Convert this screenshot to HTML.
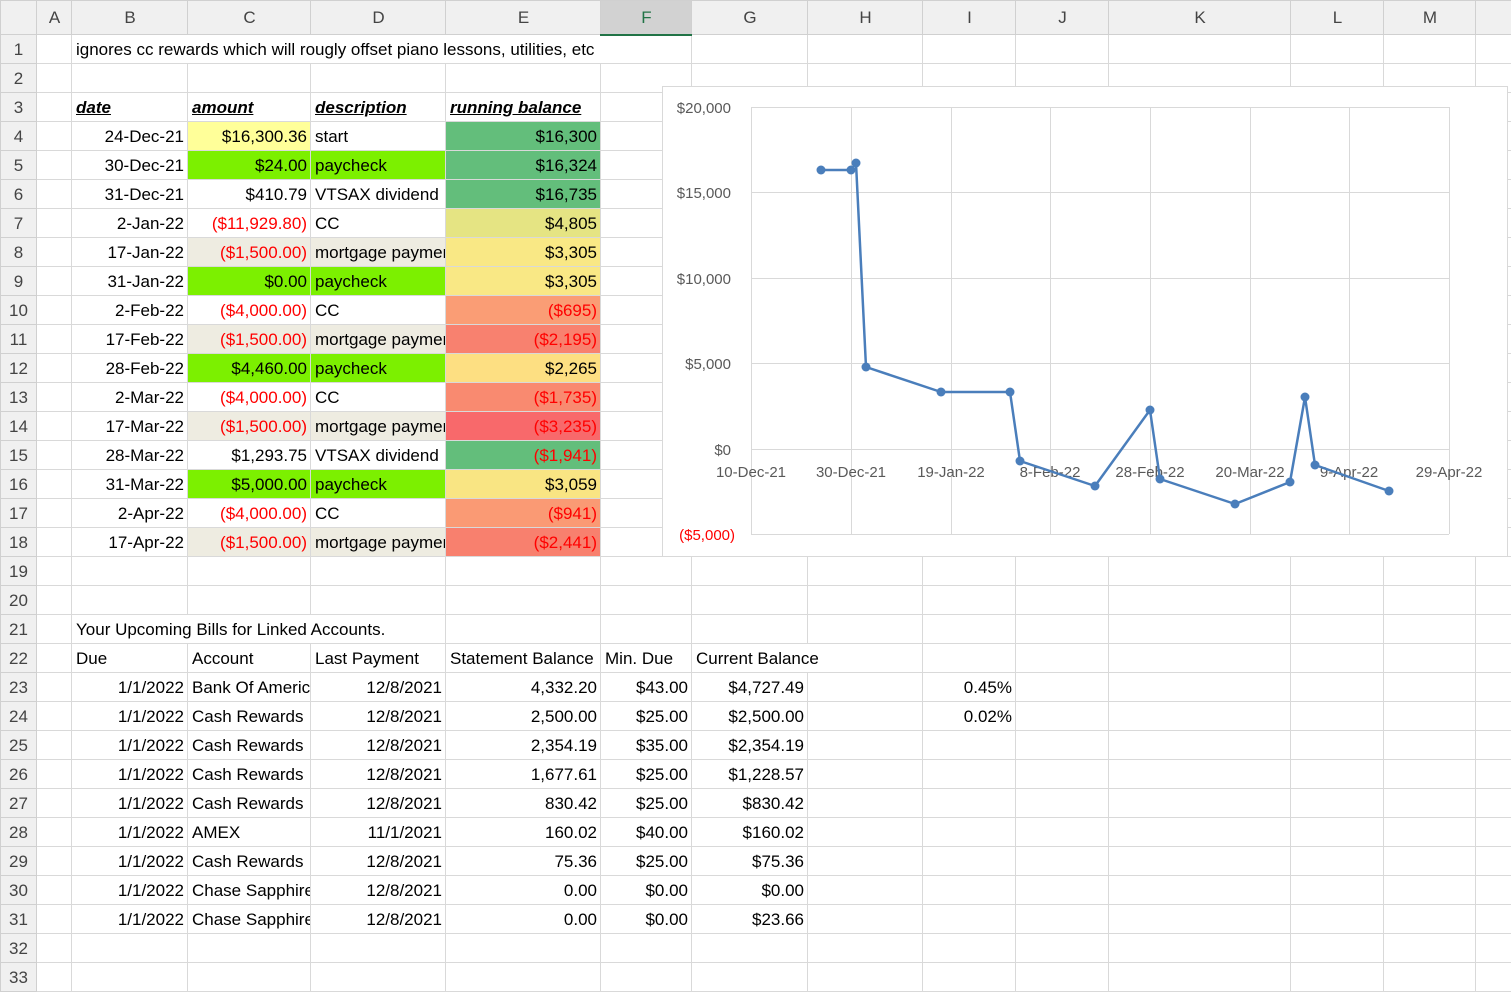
<!DOCTYPE html>
<html><head><meta charset="utf-8"><style>
*{margin:0;padding:0;box-sizing:border-box}
body{width:1511px;height:991px;overflow:hidden;background:#fff;font-family:"Liberation Sans",sans-serif;font-size:17px;color:#000;position:relative}
table{border-collapse:collapse;table-layout:fixed;position:absolute;left:0;top:0;width:1515px}
td{height:29px;border:1px solid #D9D9D9;white-space:nowrap;overflow:hidden;padding:0 3px 0 4px;line-height:27px}
tr.h td{height:34px;background:#F0F0F0;color:#444;text-align:center;font-size:17px;border-color:#D0D0D0}
td.rh{background:#F0F0F0;color:#444;text-align:center;padding:0;border-color:#D0D0D0}
.r{text-align:right}
.red{color:#FF0000}
.hd{font-weight:bold;font-style:italic;text-decoration:underline}
.y{background:#FFFF99}.g{background:#7CF000}.b{background:#EEECE1}
.sel{background:#D2D2D2!important;border-bottom:2px solid #217346!important;color:#217346!important}
.ov{overflow:visible}
</style></head><body>
<table>
<colgroup><col style="width:36px"><col style="width:35px"><col style="width:116px"><col style="width:123px"><col style="width:135px"><col style="width:155px"><col style="width:91px"><col style="width:116px"><col style="width:115px"><col style="width:93px"><col style="width:93px"><col style="width:182px"><col style="width:93px"><col style="width:92px"><col style="width:40px"></colgroup>
<tr class="h"><td></td><td>A</td><td>B</td><td>C</td><td>D</td><td>E</td><td class="sel">F</td><td>G</td><td>H</td><td>I</td><td>J</td><td>K</td><td>L</td><td>M</td><td></td></tr>
<tr><td class="rh">1</td><td></td><td class="ov" colspan="5">ignores cc rewards which will rougly offset piano lessons, utilities, etc</td><td></td><td></td><td></td><td></td><td></td><td></td><td></td><td></td></tr>
<tr><td class="rh">2</td><td></td><td></td><td></td><td></td><td></td><td></td><td></td><td></td><td></td><td></td><td></td><td></td><td></td><td></td></tr>
<tr><td class="rh">3</td><td></td><td class="hd">date</td><td class="hd">amount</td><td class="hd">description</td><td class="hd">running balance</td><td></td><td></td><td></td><td></td><td></td><td></td><td></td><td></td><td></td></tr>
<tr><td class="rh">4</td><td></td><td class="r">24-Dec-21</td><td class="r y">$16,300.36</td><td>start</td><td class="r" style="background:#63BE7B">$16,300</td><td></td><td></td><td></td><td></td><td></td><td></td><td></td><td></td><td></td></tr>
<tr><td class="rh">5</td><td></td><td class="r">30-Dec-21</td><td class="r g">$24.00</td><td class="g">paycheck</td><td class="r" style="background:#63BE7B">$16,324</td><td></td><td></td><td></td><td></td><td></td><td></td><td></td><td></td><td></td></tr>
<tr><td class="rh">6</td><td></td><td class="r">31-Dec-21</td><td class="r">$410.79</td><td>VTSAX dividend</td><td class="r" style="background:#63BE7B">$16,735</td><td></td><td></td><td></td><td></td><td></td><td></td><td></td><td></td><td></td></tr>
<tr><td class="rh">7</td><td></td><td class="r">2-Jan-22</td><td class="r red">($11,929.80)</td><td>CC</td><td class="r" style="background:#E5E483">$4,805</td><td></td><td></td><td></td><td></td><td></td><td></td><td></td><td></td><td></td></tr>
<tr><td class="rh">8</td><td></td><td class="r">17-Jan-22</td><td class="r red b">($1,500.00)</td><td class="b">mortgage payment</td><td class="r" style="background:#F9E885">$3,305</td><td></td><td></td><td></td><td></td><td></td><td></td><td></td><td></td><td></td></tr>
<tr><td class="rh">9</td><td></td><td class="r">31-Jan-22</td><td class="r g">$0.00</td><td class="g">paycheck</td><td class="r" style="background:#F9E885">$3,305</td><td></td><td></td><td></td><td></td><td></td><td></td><td></td><td></td><td></td></tr>
<tr><td class="rh">10</td><td></td><td class="r">2-Feb-22</td><td class="r red">($4,000.00)</td><td>CC</td><td class="r red" style="background:#FA9D75">($695)</td><td></td><td></td><td></td><td></td><td></td><td></td><td></td><td></td><td></td></tr>
<tr><td class="rh">11</td><td></td><td class="r">17-Feb-22</td><td class="r red b">($1,500.00)</td><td class="b">mortgage payment</td><td class="r red" style="background:#F8816F">($2,195)</td><td></td><td></td><td></td><td></td><td></td><td></td><td></td><td></td><td></td></tr>
<tr><td class="rh">12</td><td></td><td class="r">28-Feb-22</td><td class="r g">$4,460.00</td><td class="g">paycheck</td><td class="r" style="background:#FDDF82">$2,265</td><td></td><td></td><td></td><td></td><td></td><td></td><td></td><td></td><td></td></tr>
<tr><td class="rh">13</td><td></td><td class="r">2-Mar-22</td><td class="r red">($4,000.00)</td><td>CC</td><td class="r red" style="background:#F98A70">($1,735)</td><td></td><td></td><td></td><td></td><td></td><td></td><td></td><td></td><td></td></tr>
<tr><td class="rh">14</td><td></td><td class="r">17-Mar-22</td><td class="r red b">($1,500.00)</td><td class="b">mortgage payment</td><td class="r red" style="background:#F8696B">($3,235)</td><td></td><td></td><td></td><td></td><td></td><td></td><td></td><td></td><td></td></tr>
<tr><td class="rh">15</td><td></td><td class="r">28-Mar-22</td><td class="r">$1,293.75</td><td>VTSAX dividend</td><td class="r red" style="background:#63BE7B">($1,941)</td><td></td><td></td><td></td><td></td><td></td><td></td><td></td><td></td><td></td></tr>
<tr><td class="rh">16</td><td></td><td class="r">31-Mar-22</td><td class="r g">$5,000.00</td><td class="g">paycheck</td><td class="r" style="background:#F9E583">$3,059</td><td></td><td></td><td></td><td></td><td></td><td></td><td></td><td></td><td></td></tr>
<tr><td class="rh">17</td><td></td><td class="r">2-Apr-22</td><td class="r red">($4,000.00)</td><td>CC</td><td class="r red" style="background:#FA9A74">($941)</td><td></td><td></td><td></td><td></td><td></td><td></td><td></td><td></td><td></td></tr>
<tr><td class="rh">18</td><td></td><td class="r">17-Apr-22</td><td class="r red b">($1,500.00)</td><td class="b">mortgage payment</td><td class="r red" style="background:#F8806E">($2,441)</td><td></td><td></td><td></td><td></td><td></td><td></td><td></td><td></td><td></td></tr>
<tr><td class="rh">19</td><td></td><td></td><td></td><td></td><td></td><td></td><td></td><td></td><td></td><td></td><td></td><td></td><td></td><td></td></tr>
<tr><td class="rh">20</td><td></td><td></td><td></td><td></td><td></td><td></td><td></td><td></td><td></td><td></td><td></td><td></td><td></td><td></td></tr>
<tr><td class="rh">21</td><td></td><td class="ov" colspan="3">Your Upcoming Bills for Linked Accounts.</td><td></td><td></td><td></td><td></td><td></td><td></td><td></td><td></td><td></td><td></td></tr>
<tr><td class="rh">22</td><td></td><td>Due</td><td>Account</td><td>Last Payment</td><td>Statement Balance</td><td>Min. Due</td><td class="ov" colspan="2">Current Balance</td><td></td><td></td><td></td><td></td><td></td><td></td></tr>
<tr><td class="rh">23</td><td></td><td class="r">1/1/2022</td><td>Bank Of America</td><td class="r">12/8/2021</td><td class="r">4,332.20</td><td class="r">$43.00</td><td class="r">$4,727.49</td><td></td><td class="r">0.45%</td><td></td><td></td><td></td><td></td><td></td></tr>
<tr><td class="rh">24</td><td></td><td class="r">1/1/2022</td><td>Cash Rewards</td><td class="r">12/8/2021</td><td class="r">2,500.00</td><td class="r">$25.00</td><td class="r">$2,500.00</td><td></td><td class="r">0.02%</td><td></td><td></td><td></td><td></td><td></td></tr>
<tr><td class="rh">25</td><td></td><td class="r">1/1/2022</td><td>Cash Rewards</td><td class="r">12/8/2021</td><td class="r">2,354.19</td><td class="r">$35.00</td><td class="r">$2,354.19</td><td></td><td></td><td></td><td></td><td></td><td></td><td></td></tr>
<tr><td class="rh">26</td><td></td><td class="r">1/1/2022</td><td>Cash Rewards</td><td class="r">12/8/2021</td><td class="r">1,677.61</td><td class="r">$25.00</td><td class="r">$1,228.57</td><td></td><td></td><td></td><td></td><td></td><td></td><td></td></tr>
<tr><td class="rh">27</td><td></td><td class="r">1/1/2022</td><td>Cash Rewards</td><td class="r">12/8/2021</td><td class="r">830.42</td><td class="r">$25.00</td><td class="r">$830.42</td><td></td><td></td><td></td><td></td><td></td><td></td><td></td></tr>
<tr><td class="rh">28</td><td></td><td class="r">1/1/2022</td><td>AMEX</td><td class="r">11/1/2021</td><td class="r">160.02</td><td class="r">$40.00</td><td class="r">$160.02</td><td></td><td></td><td></td><td></td><td></td><td></td><td></td></tr>
<tr><td class="rh">29</td><td></td><td class="r">1/1/2022</td><td>Cash Rewards</td><td class="r">12/8/2021</td><td class="r">75.36</td><td class="r">$25.00</td><td class="r">$75.36</td><td></td><td></td><td></td><td></td><td></td><td></td><td></td></tr>
<tr><td class="rh">30</td><td></td><td class="r">1/1/2022</td><td>Chase Sapphire</td><td class="r">12/8/2021</td><td class="r">0.00</td><td class="r">$0.00</td><td class="r">$0.00</td><td></td><td></td><td></td><td></td><td></td><td></td><td></td></tr>
<tr><td class="rh">31</td><td></td><td class="r">1/1/2022</td><td>Chase Sapphire</td><td class="r">12/8/2021</td><td class="r">0.00</td><td class="r">$0.00</td><td class="r">$23.66</td><td></td><td></td><td></td><td></td><td></td><td></td><td></td></tr>
<tr><td class="rh">32</td><td></td><td></td><td></td><td></td><td></td><td></td><td></td><td></td><td></td><td></td><td></td><td></td><td></td><td></td></tr>
<tr><td class="rh">33</td><td></td><td></td><td></td><td></td><td></td><td></td><td></td><td></td><td></td><td></td><td></td><td></td><td></td><td></td></tr>
</table>
<svg width="1511" height="991" style="position:absolute;left:0;top:0" font-family="Liberation Sans, sans-serif" font-size="15">
<rect x="662.5" y="86.5" width="845" height="470" fill="#fff" stroke="#D9D9D9"/>
<g stroke="#D9D9D9" stroke-width="1">
<line x1="751" y1="107.5" x2="1449" y2="107.5"/><line x1="751" y1="192.5" x2="1449" y2="192.5"/><line x1="751" y1="278.5" x2="1449" y2="278.5"/><line x1="751" y1="363.5" x2="1449" y2="363.5"/><line x1="751" y1="449.5" x2="1449" y2="449.5"/><line x1="751" y1="534.5" x2="1449" y2="534.5"/>
<line x1="751.5" y1="107" x2="751.5" y2="534"/><line x1="851.5" y1="107" x2="851.5" y2="534"/><line x1="951.5" y1="107" x2="951.5" y2="534"/><line x1="1050.5" y1="107" x2="1050.5" y2="534"/><line x1="1150.5" y1="107" x2="1150.5" y2="534"/><line x1="1250.5" y1="107" x2="1250.5" y2="534"/><line x1="1349.5" y1="107" x2="1349.5" y2="534"/><line x1="1449.5" y1="107" x2="1449.5" y2="534"/>
</g>
<g fill="#595959" text-anchor="end">
<text x="731" y="113">$20,000</text><text x="731" y="198">$15,000</text><text x="731" y="284">$10,000</text><text x="731" y="369">$5,000</text><text x="731" y="455">$0</text><text x="735" y="540" fill="#FF0000">($5,000)</text>
</g>
<g fill="#595959" text-anchor="middle">
<text x="751" y="477">10-Dec-21</text><text x="851" y="477">30-Dec-21</text><text x="951" y="477">19-Jan-22</text><text x="1050" y="477">8-Feb-22</text><text x="1150" y="477">28-Feb-22</text><text x="1250" y="477">20-Mar-22</text><text x="1349" y="477">9-Apr-22</text><text x="1449" y="477">29-Apr-22</text>
</g>
<polyline fill="none" stroke="#4A7EBB" stroke-width="2.5" stroke-linejoin="round" points="821,170 851,170 856,163 866,367 941,392 1010,392 1020,461 1095,486 1150,410 1160,479 1235,504 1290,482 1305,397 1315,465 1389,491"/>
<g fill="#4A7EBB">
<circle cx="821" cy="170" r="4.5"/><circle cx="851" cy="170" r="4.5"/><circle cx="856" cy="163" r="4.5"/><circle cx="866" cy="367" r="4.5"/><circle cx="941" cy="392" r="4.5"/><circle cx="1010" cy="392" r="4.5"/><circle cx="1020" cy="461" r="4.5"/><circle cx="1095" cy="486" r="4.5"/><circle cx="1150" cy="410" r="4.5"/><circle cx="1160" cy="479" r="4.5"/><circle cx="1235" cy="504" r="4.5"/><circle cx="1290" cy="482" r="4.5"/><circle cx="1305" cy="397" r="4.5"/><circle cx="1315" cy="465" r="4.5"/><circle cx="1389" cy="491" r="4.5"/>
</g>
</svg>
</body></html>
